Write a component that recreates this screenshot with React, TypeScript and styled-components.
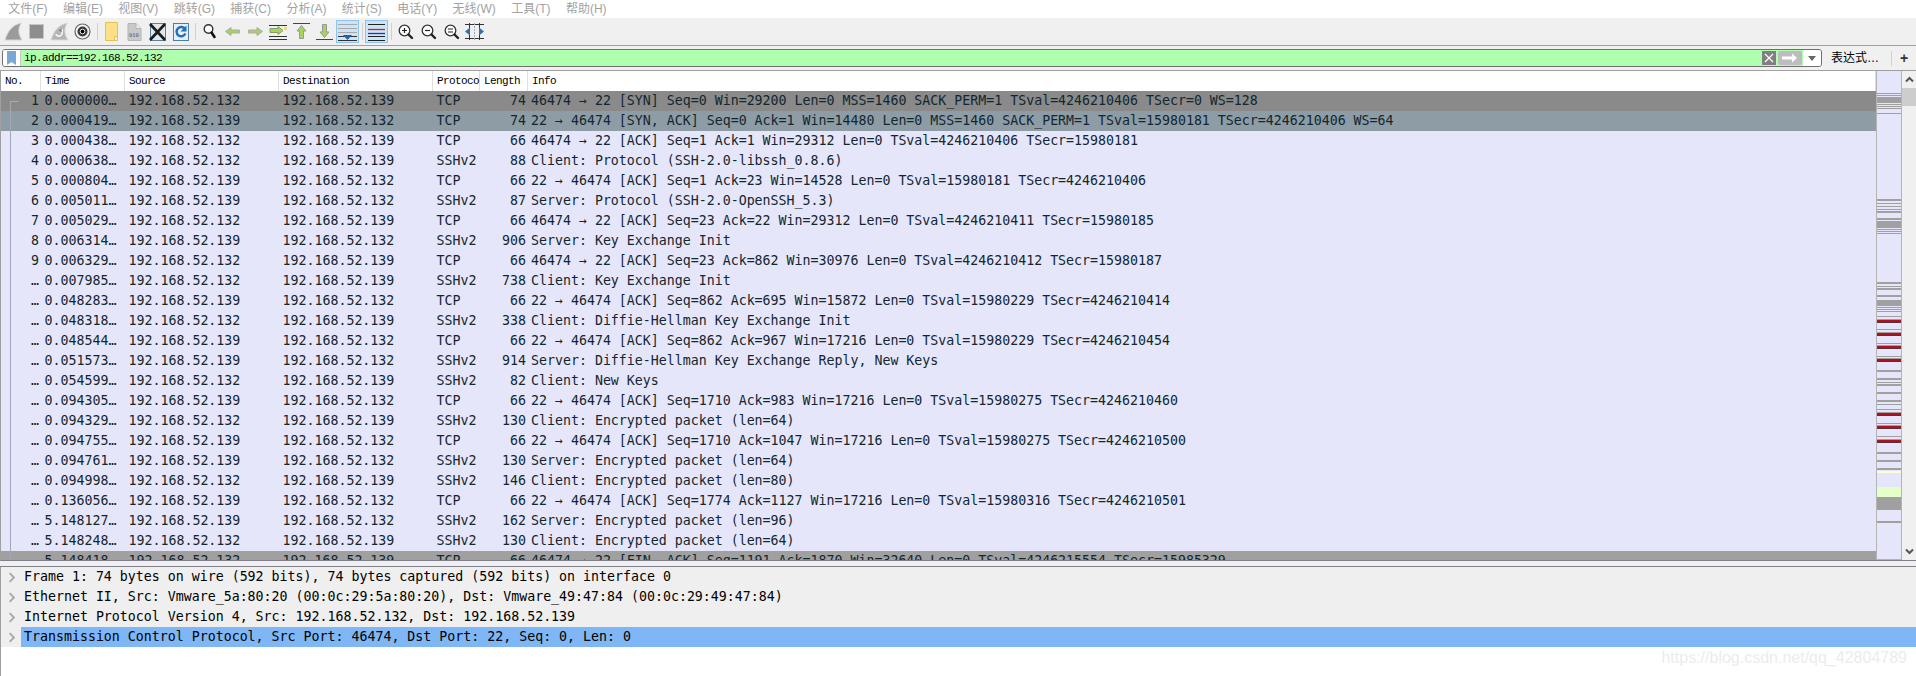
import React from 'react';
import styled, { createGlobalStyle, css } from 'styled-components';

const GlobalStyle = createGlobalStyle`
  html, body, #root {
    margin: 0;
    height: 100%;
    overflow: hidden;
    background: #fff;
  }
`;

const MONO = `"DejaVu Sans Mono", "Liberation Mono", monospace`;
const HEAD = `"Liberation Mono", "Noto Sans CJK SC", monospace`;
const UI = `"Liberation Sans", "Noto Sans CJK SC", sans-serif`;

const Page = styled.div`
  position: relative;
  display: flex;
  flex-direction: column;
  height: 676px;
  overflow: hidden;
`;

const MenuBar = styled.div`
  display: flex;
  height: 18px;
  padding-left: 0.5px;
  background: #fff;
  flex: none;
`;
const MenuItem = styled.div`
  padding: 0 7.7px;
  font: 12px/18px ${UI};
  color: #a2a2a2;
  white-space: nowrap;
`;

const ToolBar = styled.div`
  display: flex;
  align-items: center;
  flex: none;
  height: 27px;
  padding-left: 2px;
  background: #f0f0f0;
  border-bottom: 1px solid #a0a0a0;
`;
const ToolButton = styled.div<{ $active?: boolean }>`
  display: flex;
  align-items: center;
  justify-content: center;
  box-sizing: border-box;
  width: 23px;
  height: 23px;
  ${({ $active }) =>
    $active &&
    css`
      background: #cce4f7;
      border: 1px solid #8cc4ee;
    `}
`;
const ToolSep = styled.div`
  width: 6px;
  height: 17px;
  background: linear-gradient(#d0d0d0, #d0d0d0) center / 1px 100% no-repeat;
`;

const FilterBar = styled.div`
  display: flex;
  align-items: center;
  flex: none;
  height: 24px;
  padding: 0 0 0 2px;
  background: #f0f0f0;
  border-bottom: 1px solid #a0a0a0;
`;
const FilterBox = styled.div`
  display: flex;
  align-items: center;
  box-sizing: border-box;
  width: 1822px;
  height: 18px;
  margin-right: 9px;
  background: #afffaf;
  border: 1px solid #707070;
  border-radius: 3px;
  overflow: hidden;
`;
const BookmarkButton = styled.div`
  display: flex;
  align-items: center;
  justify-content: center;
  flex: none;
  width: 17px;
  height: 100%;
  background: #fff;
  border-right: 1px solid #c8c8c8;
`;
const FilterText = styled.div`
  flex: 1;
  padding-left: 3px;
  font: 11px/16px ${HEAD};
  letter-spacing: -0.6px;
  color: #000;
`;
const FilterActions = styled.div`
  display: flex;
  align-items: center;
  flex: none;
  height: 100%;
`;
const DropButton = styled.div`
  display: flex;
  align-items: center;
  justify-content: center;
  width: 18px;
  height: 100%;
  background: #fff;
`;
const ExpressionLabel = styled.div`
  width: 60px;
  font: 12px/18px ${UI};
  color: #000;
  white-space: nowrap;
`;
const BarDivider = styled.div`
  width: 1px;
  height: 15px;
  background: #d0d0d0;
`;
const PlusButton = styled.div`
  width: 24px;
  text-align: center;
  font: bold 14px/18px ${UI};
  color: #333;
`;

const PacketPane = styled.div`
  display: flex;
  flex: none;
  height: 490px;
  border-bottom: 1px solid #80808c;
  box-sizing: border-box;
  border-left: 1px solid #a0a0a0;
`;
const PacketList = styled.div`
  flex: 1;
  min-width: 0;
  overflow: hidden;
`;
const columns = css`
  display: grid;
  grid-template-columns: 40px 84px 154px 154px 47px 48px 1fr;
`;
const HeaderRow = styled.div`
  ${columns}
  height: 20px;
  background: #fff;
`;
const HeaderCell = styled.div`
  padding-left: 4px;
  font: 11px/20px ${HEAD};
  letter-spacing: -0.6px;
  color: #000;
  white-space: nowrap;
  overflow: hidden;
  box-shadow: inset -1px 0 0 #e0e0e0;
`;
const Row = styled.div<{ $bg: string }>`
  ${columns}
  height: 20px;
  background: ${({ $bg }) => $bg};
`;
const Cell = styled.div<{ $right?: boolean; $tight?: boolean }>`
  position: relative;
  padding: ${({ $right, $tight }) => ($right ? '0 2px 0 0' : $tight ? '0 0 0 3px' : '0 0 0 3.5px')};
  text-align: ${({ $right }) => ($right ? 'right' : 'left')};
  font: 13.28px/20px ${MONO};
  color: #12272e;
  white-space: pre;
`;
const NoCell = styled(Cell)<{ $first?: boolean }>`
  &::before {
    content: '';
    position: absolute;
    left: 9px;
    width: 1px;
    background: ${({ $first }) => ($first ? '#a8a8a8' : '#a3a6b8')};
    top: ${({ $first }) => ($first ? '10px' : '0')};
    bottom: 0;
  }
  ${({ $first }) =>
    $first &&
    css`
      &::after {
        content: '';
        position: absolute;
        left: 9px;
        top: 10px;
        width: 9px;
        height: 1px;
        background: #a8a8a8;
      }
    `}
`;

const Minimap = styled.svg`
  display: block;
  flex: none;
  box-sizing: border-box;
  width: 26px;
  height: 489px;
  border-left: 1px solid #b4b4b4;
  border-right: 1px solid #b4b4b4;
  border-bottom: 1px solid #b4b4b4;
`;
const ScrollBar = styled.div`
  display: flex;
  flex-direction: column;
  align-items: center;
  flex: none;
  width: 14px;
  background: #f0f0f0;
`;
const ScrollArrow = styled.div`
  display: flex;
  align-items: center;
  justify-content: center;
  flex: none;
  height: 17px;
  width: 100%;
`;
const ScrollThumb = styled.div`
  flex: none;
  width: 100%;
  height: 18px;
  background: #cdcdcd;
`;
const ScrollTrack = styled.div`
  flex: 1;
`;

const Splitter = styled.div`
  flex: none;
  height: 5px;
  background: #f0f0f0;
  border-bottom: 1px solid #80808c;
`;
const DetailPane = styled.div`
  flex: 1;
  background: #fff;
  border-left: 1px solid #a0a0a0;
`;
const DetailRow = styled.div`
  display: flex;
  height: 20px;
  background: #efefef;
`;
const Twisty = styled.div`
  display: flex;
  align-items: center;
  justify-content: center;
  flex: none;
  width: 20px;
`;
const DetailText = styled.div<{ $selected?: boolean }>`
  flex: 1;
  padding-left: 3px;
  font: 13.28px/20px ${MONO};
  color: #000;
  white-space: pre;
  background: ${({ $selected }) => ($selected ? '#7fb6f6' : 'transparent')};
`;
const Watermark = styled.div`
  position: absolute;
  right: 9px;
  bottom: 8px;
  font: 16px/20px "Liberation Sans", sans-serif;
  color: #ececec;
  white-space: nowrap;
`;

/* toolbar drawings */
const Ico: React.FC<{ children: React.ReactNode }> = ({ children }) => (
  <svg width="21" height="21" viewBox="0 0 21 21" fill="none">
    {children}
  </svg>
);
const FindIcon = () => (
  <Ico>
    <circle cx="9.500" cy="8" r="4.300" fill="#fff" stroke="#333" strokeWidth="1.400" />
    <path d="M12.500 11.500 15.500 16" stroke="#111" strokeWidth="2.600" strokeLinecap="round" />
  </Ico>
);
const ZoomGlass: React.FC<{ children?: React.ReactNode }> = ({ children }) => (
  <Ico>
    <circle cx="9.500" cy="9.500" r="5.300" fill="#fff" stroke="#333" strokeWidth="1.300" />
    <path d="M13.500 13.500 17 17" stroke="#222" strokeWidth="2.400" strokeLinecap="round" />
    {children}
  </Ico>
);
const StartIcon = () => (
  <Ico>
    <path d="M2 19C5 9 10 4 18 2c-3 6-3 11 1 17z" fill="#9b9b9b" stroke="#d4d4d4" />
  </Ico>
);
const StopIcon = () => (
  <Ico>
    <rect x="3.500" y="3.500" width="14" height="14" fill="#8d8d8d" stroke="#c6c6c6" />
  </Ico>
);
const RestartIcon = () => (
  <Ico>
    <path d="M2 19C5 9 10 4 18 2c-3 6-3 11 1 17z" fill="#b5b5b5" stroke="#d8d8d8" />
    <path d="M13 8c0 0 1 6-2 7s-4-2-4-2" stroke="#f2f2f2" strokeWidth="1.800" />
    <path d="M12 8v3M12 8l-2 2" stroke="#777" />
  </Ico>
);
const OptionsIcon = () => (
  <Ico>
    <circle cx="10.500" cy="10.500" r="7.500" fill="#f4f4f4" stroke="#666" strokeWidth="1.200" />
    <circle cx="10.500" cy="10.500" r="5" fill="#3a3a3a" />
    <circle cx="10.500" cy="10.500" r="2.300" fill="#000" stroke="#e8e8e8" strokeWidth="1" />
  </Ico>
);
const OpenIcon = () => (
  <Ico>
    <path d="M4.500 1.500h12v14h-3v4h-9z" fill="#fde08a" stroke="#e9bf4f" />
    <path d="M16.500 15.500v4h-3v-4z" fill="#f0f0f0" stroke="#e9bf4f" />
  </Ico>
);
const FileIcon = () => (
  <Ico>
    <path d="M4 2.500h8l5 5v12H4z" fill="#c9c9c9" stroke="#b4b4b4" />
    <path d="M12 2.500v5h5" fill="#eee" stroke="#b4b4b4" />
    <text x="5" y="15.500" fontSize="5.500" fontFamily="Liberation Mono" fontWeight="700" fill="#777">
      010
    </text>
  </Ico>
);
const CloseIcon = () => (
  <Ico>
    <rect x="3.500" y="2.500" width="15" height="17" fill="#dfe8ef" stroke="#5c7f9b" />
    <path d="M3 3l15 16M18 3 3 19" stroke="#1c1c1c" strokeWidth="2.600" />
  </Ico>
);
const ReloadIcon = () => (
  <Ico>
    <rect x="3.500" y="2.500" width="15" height="17" fill="#e8eef4" stroke="#4d7ea8" />
    <path d="M15 8a4.600 4.600 0 1 0 .4 4.600" stroke="#1c6fc2" strokeWidth="2.400" />
    <path d="M16.500 4.500v6h-6z" fill="#1c6fc2" />
  </Ico>
);
const ArrowLeftIcon = () => (
  <Ico>
    <path d="M3.500 10.500 9 6.500v2.500h8.500v3H9v2.500z" fill="#a6d45a" stroke="#aaa" />
  </Ico>
);
const ArrowRightIcon = () => (
  <Ico>
    <path d="M17.500 10.500 12 6.500v2.500H3.500v3H12v2.500z" fill="#a6d45a" stroke="#aaa" />
  </Ico>
);
const GotoIcon = () => (
  <Ico>
    <path d="M1 4.500h18M1 15.500h18M1 18.500h18" stroke="#333" />
    <path d="M2 7.500h8V5.500l5 4-5 4v-2H2z" fill="#a6d45a" stroke="#8a9a70" />
    <path d="M16 6h3v3h-3z" fill="#f5dc6a" />
  </Ico>
);
const TopIcon = () => (
  <Ico>
    <path d="M2 2.500h17" stroke="#444" />
    <path d="M10.500 4.500 15 10h-2.500v7.500h-4V10H6z" fill="#a6d45a" stroke="#999" />
  </Ico>
);
const BottomIcon = () => (
  <Ico>
    <path d="M2 18.500h17" stroke="#444" />
    <path d="M10.500 16.500 15 11h-2.500V3.500h-4V11H6z" fill="#a6d45a" stroke="#999" />
  </Ico>
);
const AutoScrollIcon = () => (
  <Ico>
    <path d="M1 3.500h19M1 7.500h19M1 11.500h19" stroke="#a8a8a8" />
    <path d="M1 15.500h19M1 19.500h19" stroke="#333" />
    <path d="M6 14h9l-4.500 5z" fill="#2a5ea8" />
  </Ico>
);
const ColorizeIcon = () => (
  <Ico>
    <path d="M2 3.500h17M2 19.500h17" stroke="#222" />
    <path d="M2 8.500h17" stroke="#d0202a" strokeWidth="1.300" />
    <path d="M2 12.500h17" stroke="#2430c0" strokeWidth="1.300" />
    <path d="M2 15.500h17" stroke="#222" />
  </Ico>
);
const ResizeIcon = () => (
  <Ico>
    <path d="M1 3.500h19M1 17.500h19M5.500 2v17M15.500 2v17" stroke="#333" />
    <path d="M1 10.500l5-4v8zM20 10.500l-5-4v8z" fill="#2f6fb8" />
    <path d="M10.500 2v17" stroke="#9ab" strokeDasharray="2 1" />
  </Ico>
);
const Chevron: React.FC<{ dir: 'up' | 'down' | 'right'; color: string; size?: number; sw?: number }> = ({
  dir,
  color,
  size = 9,
  sw = 2,
}) => {
  const d = dir === 'up' ? 'M1 6.500 4.500 3 8 6.500' : dir === 'down' ? 'M1 2.500 4.500 6 8 2.500' : 'M3 1l3.500 3.500L3 8';
  return (
    <svg width={size} height={size} viewBox="0 0 9 9" fill="none">
      <path d={d} stroke={color} strokeWidth={sw} />
    </svg>
  );
};

type Mark = [number, number, string];
const G = '#a0a0a0';
const R = '#b01020';
const D = '#5a3038';
const grays: [number, number][] = [
  [100, 102], [106, 108], [112, 128], [132, 134], [138, 140], [145, 147], [158, 161],
  [418, 423], [430, 432], [438, 440], [446, 449], [454, 458], [475, 480], [484, 503], [508, 510], [514, 516], [520, 523],
  [667, 671], [677, 680], [685, 689], [706, 711], [720, 738], [742, 744], [748, 750], [754, 756], [768, 771],
  [808, 811], [848, 851], [888, 891], [930, 935], [955, 960], [965, 968], [973, 977], [996, 1001],
  [1020, 1025], [1031, 1034], [1046, 1049], [1088, 1091], [1127, 1132], [1176, 1181], [1200, 1205], [1224, 1229],
  [1311, 1349], [1352, 1354], [1358, 1360], [1364, 1366], [1370, 1372], [1384, 1389],
];
const reds = [777, 816, 855, 894, 1055, 1095, 1136];
const marks: Mark[] = [
  ...grays.map(([a, b]): Mark => [a, b, G]),
  ...reds.flatMap((y): Mark[] => [
    [y, y + 3, G],
    [y + 3, y + 9, R],
    [y + 9, y + 13, D],
  ]),
  [1232, 1240, '#fdfdd0'],
  [1282, 1311, '#e4ffc7'],
];

const menus = ['文件(F)', '编辑(E)', '视图(V)', '跳转(G)', '捕获(C)', '分析(A)', '统计(S)', '电话(Y)', '无线(W)', '工具(T)', '帮助(H)'];

const A = '192.168.52.132';
const B = '192.168.52.139';
type Pkt = [string, string, string, string, string, string];
const packets: Pkt[] = [
  ['0.000000…', A, 'TCP', '74', '46474 → 22 [SYN] Seq=0 Win=29200 Len=0 MSS=1460 SACK_PERM=1 TSval=4246210406 TSecr=0 WS=128', '#8a8a8a'],
  ['0.000419…', B, 'TCP', '74', '22 → 46474 [SYN, ACK] Seq=0 Ack=1 Win=14480 Len=0 MSS=1460 SACK_PERM=1 TSval=15980181 TSecr=4246210406 WS=64', '#8e9ca6'],
  ['0.000438…', A, 'TCP', '66', '46474 → 22 [ACK] Seq=1 Ack=1 Win=29312 Len=0 TSval=4246210406 TSecr=15980181', ''],
  ['0.000638…', A, 'SSHv2', '88', 'Client: Protocol (SSH-2.0-libssh_0.8.6)', ''],
  ['0.000804…', B, 'TCP', '66', '22 → 46474 [ACK] Seq=1 Ack=23 Win=14528 Len=0 TSval=15980181 TSecr=4246210406', ''],
  ['0.005011…', B, 'SSHv2', '87', 'Server: Protocol (SSH-2.0-OpenSSH_5.3)', ''],
  ['0.005029…', A, 'TCP', '66', '46474 → 22 [ACK] Seq=23 Ack=22 Win=29312 Len=0 TSval=4246210411 TSecr=15980185', ''],
  ['0.006314…', B, 'SSHv2', '906', 'Server: Key Exchange Init', ''],
  ['0.006329…', A, 'TCP', '66', '46474 → 22 [ACK] Seq=23 Ack=862 Win=30976 Len=0 TSval=4246210412 TSecr=15980187', ''],
  ['0.007985…', A, 'SSHv2', '738', 'Client: Key Exchange Init', ''],
  ['0.048283…', B, 'TCP', '66', '22 → 46474 [ACK] Seq=862 Ack=695 Win=15872 Len=0 TSval=15980229 TSecr=4246210414', ''],
  ['0.048318…', A, 'SSHv2', '338', 'Client: Diffie-Hellman Key Exchange Init', ''],
  ['0.048544…', B, 'TCP', '66', '22 → 46474 [ACK] Seq=862 Ack=967 Win=17216 Len=0 TSval=15980229 TSecr=4246210454', ''],
  ['0.051573…', B, 'SSHv2', '914', 'Server: Diffie-Hellman Key Exchange Reply, New Keys', ''],
  ['0.054599…', A, 'SSHv2', '82', 'Client: New Keys', ''],
  ['0.094305…', B, 'TCP', '66', '22 → 46474 [ACK] Seq=1710 Ack=983 Win=17216 Len=0 TSval=15980275 TSecr=4246210460', ''],
  ['0.094329…', A, 'SSHv2', '130', 'Client: Encrypted packet (len=64)', ''],
  ['0.094755…', B, 'TCP', '66', '22 → 46474 [ACK] Seq=1710 Ack=1047 Win=17216 Len=0 TSval=15980275 TSecr=4246210500', ''],
  ['0.094761…', B, 'SSHv2', '130', 'Server: Encrypted packet (len=64)', ''],
  ['0.094998…', A, 'SSHv2', '146', 'Client: Encrypted packet (len=80)', ''],
  ['0.136056…', B, 'TCP', '66', '22 → 46474 [ACK] Seq=1774 Ack=1127 Win=17216 Len=0 TSval=15980316 TSecr=4246210501', ''],
  ['5.148127…', B, 'SSHv2', '162', 'Server: Encrypted packet (len=96)', ''],
  ['5.148248…', A, 'SSHv2', '130', 'Client: Encrypted packet (len=64)', ''],
  ['5.148418…', A, 'TCP', '66', '46474 → 22 [FIN, ACK] Seq=1191 Ack=1870 Win=32640 Len=0 TSval=4246215554 TSecr=15985329', '#a0a0a0'],
];

const details = [
  'Frame 1: 74 bytes on wire (592 bits), 74 bytes captured (592 bits) on interface 0',
  'Ethernet II, Src: Vmware_5a:80:20 (00:0c:29:5a:80:20), Dst: Vmware_49:47:84 (00:0c:29:49:47:84)',
  'Internet Protocol Version 4, Src: 192.168.52.132, Dst: 192.168.52.139',
  'Transmission Control Protocol, Src Port: 46474, Dst Port: 22, Seq: 0, Len: 0',
];

const headers = ['No.', 'Time', 'Source', 'Destination', 'Protocol', 'Length', 'Info'];

export default function App() {
  return (
    <Page>
      <GlobalStyle />
      <MenuBar>
        {menus.map((m) => (
          <MenuItem key={m}>{m}</MenuItem>
        ))}
      </MenuBar>

      <ToolBar>
        <ToolButton><StartIcon /></ToolButton>
        <ToolButton><StopIcon /></ToolButton>
        <ToolButton><RestartIcon /></ToolButton>
        <ToolButton><OptionsIcon /></ToolButton>
        <ToolSep />
        <ToolButton><OpenIcon /></ToolButton>
        <ToolButton><FileIcon /></ToolButton>
        <ToolButton><CloseIcon /></ToolButton>
        <ToolButton><ReloadIcon /></ToolButton>
        <ToolSep />
        <ToolButton><FindIcon /></ToolButton>
        <ToolButton><ArrowLeftIcon /></ToolButton>
        <ToolButton><ArrowRightIcon /></ToolButton>
        <ToolButton><GotoIcon /></ToolButton>
        <ToolButton><TopIcon /></ToolButton>
        <ToolButton><BottomIcon /></ToolButton>
        <ToolButton $active><AutoScrollIcon /></ToolButton>
        <ToolSep />
        <ToolButton $active><ColorizeIcon /></ToolButton>
        <ToolSep />
        <ToolButton>
          <ZoomGlass>
            <path d="M7 9.500h5M9.500 7v5" stroke="#222" strokeWidth="1.200" />
          </ZoomGlass>
        </ToolButton>
        <ToolButton>
          <ZoomGlass>
            <path d="M7 9.500h5" stroke="#222" strokeWidth="1.200" />
          </ZoomGlass>
        </ToolButton>
        <ToolButton>
          <ZoomGlass>
            <path d="M7 8h5M7 11h5" stroke="#222" strokeWidth="1.100" />
          </ZoomGlass>
        </ToolButton>
        <ToolButton><ResizeIcon /></ToolButton>
      </ToolBar>

      <FilterBar>
        <FilterBox>
          <BookmarkButton>
            <svg width="9" height="14" viewBox="0 0 9 14">
              <path d="M0 0h9v14L4.500 11 0 14z" fill="#7ba6d8" />
            </svg>
          </BookmarkButton>
          <FilterText>ip.addr==192.168.52.132</FilterText>
          <FilterActions>
            <svg width="16" height="14" viewBox="0 0 16 14">
              <rect x="1" width="14" height="14" fill="#808080" />
              <path d="M4 3l8 8M12 3l-8 8" stroke="#fff" strokeWidth="1.200" />
            </svg>
            <svg width="26" height="14" viewBox="0 0 26 14">
              <rect x="1" width="24" height="14" rx="2" fill="#bdbdbd" />
              <path d="M5 5.500h10V2.500l5 4.500-5 4.500V8.500H5z" fill="#fff" />
            </svg>
            <DropButton>
              <svg width="8" height="5" viewBox="0 0 8 5">
                <path d="M0 0h8L4 5z" fill="#666" />
              </svg>
            </DropButton>
          </FilterActions>
        </FilterBox>
        <ExpressionLabel>表达式…</ExpressionLabel>
        <BarDivider />
        <PlusButton>+</PlusButton>
      </FilterBar>

      <PacketPane>
        <PacketList>
          <HeaderRow>
            {headers.map((h) => (
              <HeaderCell key={h}>{h}</HeaderCell>
            ))}
          </HeaderRow>
          {packets.map((p, i) => {
            const [time, src, proto, len, info, bg] = p;
            return (
              <Row key={time} $bg={bg || '#e6e6fa'}>
                <NoCell $right $first={i === 0}>{i < 9 ? i + 1 : '…'}</NoCell>
                <Cell>{time}</Cell>
                <Cell>{src}</Cell>
                <Cell>{src === A ? B : A}</Cell>
                <Cell>{proto}</Cell>
                <Cell $right>{len}</Cell>
                <Cell $tight>{info}</Cell>
              </Row>
            );
          })}
        </PacketList>
        <Minimap viewBox="0 33 72 1464" preserveAspectRatio="none" shapeRendering="crispEdges">
          <rect x="0" y="33" width="72" height="1464" fill="#e6e6fa" />
          {marks.map(([a, b, c]) => (
            <rect key={`${a}-${c}`} x="0" y={a} width="72" height={b - a} fill={c} />
          ))}
        </Minimap>
        <ScrollBar>
          <ScrollArrow>
            <Chevron dir="up" color="#555" />
          </ScrollArrow>
          <ScrollThumb />
          <ScrollTrack />
          <ScrollArrow>
            <Chevron dir="down" color="#555" />
          </ScrollArrow>
        </ScrollBar>
      </PacketPane>

      <Splitter />

      <DetailPane>
        {details.map((d, i) => (
          <DetailRow key={d}>
            <Twisty>
              <Chevron dir="right" color="#a8a8a8" size={11} sw={1.500} />
            </Twisty>
            <DetailText $selected={i === 3}>{d}</DetailText>
          </DetailRow>
        ))}
      </DetailPane>
      <Watermark>https://blog.csdn.net/qq_42804789</Watermark>
    </Page>
  );
}
